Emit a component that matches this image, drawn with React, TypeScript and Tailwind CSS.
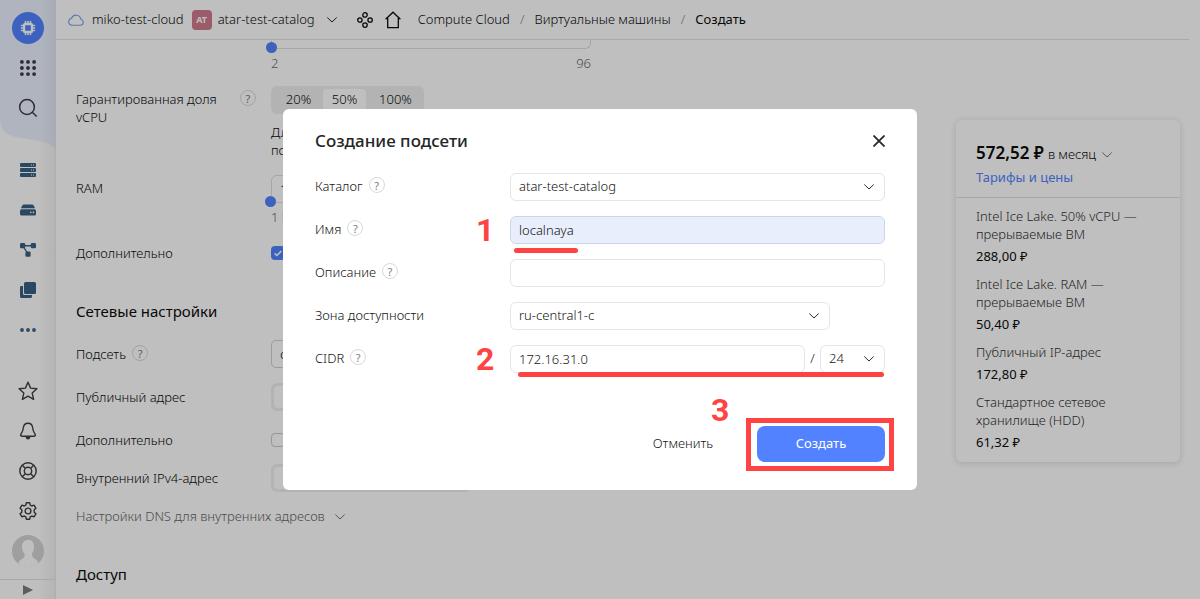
import type { ReactNode } from 'react';

function Chevron({ className = '' }: { className?: string }) {
  return (
    <svg viewBox="0 0 10 6" className={`h-1.5 w-2.5 shrink-0 ${className}`} fill="none" stroke="currentColor" aria-hidden="true">
      <path d="M.3.500L5 5l4.700-4.500" strokeWidth=".9" />
    </svg>
  );
}

function Help() {
  return (
    <button
      type="button"
      aria-label="Справка"
      className="flex size-4 shrink-0 items-center justify-center rounded-full border border-[#d9d9d9] text-[11px] leading-none font-normal text-[#7d7d7d]"
    >
      ?
    </button>
  );
}

function Icon({ children, size = 18 }: { children: ReactNode; size?: number }) {
  return (
    <svg width={size} height={size} viewBox="0 0 18 18" fill="none" stroke="currentColor" strokeWidth="1.4" strokeLinejoin="round" aria-hidden="true">
      {children}
    </svg>
  );
}

function RailButton({ label, children }: { label: string; children: ReactNode }) {
  return (
    <button type="button" aria-label={label} className="flex h-10 w-full shrink-0 items-center justify-center">
      {children}
    </button>
  );
}

function Rail() {
  return (
    <nav aria-label="Сервисы" className="relative flex w-14 shrink-0 flex-col items-center border-r border-[#e8e8e8] bg-linear-to-r from-white from-70% to-[#f1f1f1]">
      <svg className="absolute top-0 left-0" width="56" height="150" viewBox="0 0 56 150" aria-hidden="true">
        <defs>
          <linearGradient id="wave" x1="0" x2="1" y1="0" y2="0">
            <stop offset=".7" stopColor="#ebf1ff" />
            <stop offset="1" stopColor="#dfe5f3" />
          </linearGradient>
        </defs>
        <path fill="url(#wave)" d="M0 0H56V149C46 138 18 140 7 134C2 130 0 125 0 118Z" />
      </svg>
      <div className="relative flex w-full flex-col pt-2">
        <RailButton label="Compute Cloud">
          <span className="flex size-8 items-center justify-center rounded-full bg-[#5282ff] text-white">
            <svg width="16" height="16" viewBox="0 0 16 16" aria-hidden="true">
              <g stroke="currentColor" strokeWidth="1.6" strokeLinecap="round">
                <path d="M5.5 1.5v2M8 1.5v2M10.5 1.5v2M5.5 12.5v2M8 12.5v2M10.5 12.5v2M1.5 5.5h2M1.5 8h2M1.5 10.5h2M12.5 5.5h2M12.5 8h2M12.5 10.5h2" />
              </g>
              <path fill="currentColor" fillRule="evenodd" d="M4.5 3h7A1.5 1.5 0 0 1 13 4.500v7a1.500 1.500 0 0 1-1.500 1.500h-7A1.500 1.500 0 0 1 3 11.500v-7A1.500 1.500 0 0 1 4.500 3ZM5.200 5.200v5.600h5.600V5.200Z" />
            </svg>
          </span>
        </RailButton>
        <RailButton label="Все сервисы">
          <svg width="16" height="16" viewBox="0 0 16 16" fill="#3c3c44" aria-hidden="true">
            {[1.9, 8, 14.1].map((y) => [1.9, 8, 14.1].map((x) => <circle key={`${x}-${y}`} cx={x} cy={y} r="1.9" />))}
          </svg>
        </RailButton>
        <RailButton label="Поиск">
          <svg width="20" height="20" viewBox="0 0 20 20" fill="none" stroke="#3c3c44" strokeWidth="1.5" aria-hidden="true">
            <circle cx="9" cy="9" r="7.400" />
            <path d="M14.300 14.300l4.400 4.200" />
          </svg>
        </RailButton>
      </div>
      <div className="mt-[22px] flex w-full flex-col text-[#3a6083]">
        <RailButton label="Виртуальные машины">
          <svg width="16" height="14" viewBox="0 0 16 14" fill="currentColor" aria-hidden="true">
            <rect width="16" height="4" rx="1" />
            <rect y="5" width="16" height="4" rx="1" />
            <rect y="10" width="16" height="4" rx="1" />
            <path stroke="#fff" strokeWidth="1" strokeDasharray="1 1" d="M11 2h3M11 7h3M11 12h3" />
          </svg>
        </RailButton>
        <RailButton label="Диски">
          <svg width="16" height="12" viewBox="0 0 16 12" fill="currentColor" aria-hidden="true">
            <path d="M3.700.5h8.600q.6 0 1 .6L15.200 4.300H.800L2.700 1.100q.4-.6 1-.6Z" />
            <rect y="5.200" width="16" height="6.300" rx="1.500" />
            <circle cx="10.800" cy="8.400" r=".8" fill="#fff" />
            <circle cx="13.400" cy="8.400" r=".8" fill="#fff" />
          </svg>
        </RailButton>
        <RailButton label="Группы размещения">
          <svg width="16" height="14" viewBox="0 0 16 14" fill="currentColor" aria-hidden="true">
            <path stroke="currentColor" strokeWidth="1.400" d="M2.500 2.800h11M3 3l5 8" />
            <rect width="5.200" height="5.200" rx="1.200" />
            <rect x="10.800" width="5.200" height="5.200" rx="1.200" />
            <rect x="5.400" y="8.600" width="5.200" height="5.200" rx="1.200" />
          </svg>
        </RailButton>
        <RailButton label="Образы">
          <svg width="16" height="16" viewBox="0 0 16 16" fill="currentColor" aria-hidden="true">
            <rect x="4" width="12" height="12" rx="1.500" />
            <path d="M1.200 4H3v7.500Q3 13 4.500 13H12v1.500Q12 16 10.500 16h-9Q0 16 0 14.500V5.200Q0 4 1.200 4Z" />
          </svg>
        </RailButton>
        <RailButton label="Ещё">
          <svg width="16" height="4" viewBox="0 0 16 4" fill="currentColor" aria-hidden="true">
            <circle cx="2" cy="2" r="1.900" />
            <circle cx="8" cy="2" r="1.900" />
            <circle cx="14" cy="2" r="1.900" />
          </svg>
        </RailButton>
      </div>
      <div className="mt-auto flex w-full flex-col text-[#3f3f3f]">
        <RailButton label="Избранное">
          <svg width="20" height="20" viewBox="0 0 20 20" fill="none" stroke="currentColor" strokeWidth="1.400" strokeLinejoin="round" aria-hidden="true">
            <path d="M10 1.200l2.600 5.900 6.300.7-4.700 4.300 1.400 6.300L10 15.200l-5.600 3.200 1.400-6.300L1.100 7.800l6.300-.7Z" />
          </svg>
        </RailButton>
        <RailButton label="Уведомления">
          <Icon>
            <path d="M9 1.200C5.900 1.200 4.600 3.400 4.300 6c-.3 2.900-.9 4-2.200 5.800-1 1.600-.5 2.400.8 2.400h12.200c1.300 0 1.800-.8.8-2.400C14.600 10 14 8.900 13.700 6 13.400 3.400 12.100 1.200 9 1.200Z" />
            <path fill="currentColor" stroke="none" d="M6.500 15h5q-.8 2.500-2.500 2.500T6.500 15Z" />
          </Icon>
        </RailButton>
        <RailButton label="Поддержка">
          <Icon>
            <circle cx="9" cy="9" r="8.200" />
            <circle cx="9" cy="9" r="3.700" />
            <path d="M3.300 3.300l3.200 3.200M14.700 3.300l-3.200 3.200M3.300 14.700l3.200-3.200M14.700 14.700l-3.200-3.200" />
          </Icon>
        </RailButton>
        <RailButton label="Настройки">
          <Icon>
            <circle cx="9" cy="9" r="2.900" />
            <path d="M7.300.8h3.400l.5 2.300 1.600.9 2.200-.8 1.900 3-1.700 1.600v2.400l1.700 1.600-1.900 3-2.200-.8-1.600.9-.5 2.300H7.300l-.5-2.300-1.600-.9-2.200.8-1.900-3 1.700-1.600V7.800L1.100 6.200l1.900-3 2.200.8 1.600-.9Z" />
          </Icon>
        </RailButton>
        <RailButton label="Профиль">
          <svg width="32" height="32" viewBox="0 0 32 32" aria-hidden="true">
            <defs>
              <clipPath id="face">
                <circle cx="16" cy="16" r="16" />
              </clipPath>
            </defs>
            <g clipPath="url(#face)">
              <rect width="32" height="32" fill="#d4d4d4" />
              <path fill="#fff" d="M16.500 5c4 0 5.500 2.500 5.500 6.500 0 3.500-.7 5.500-2 7 0 2.500.5 4 3 5.500 2 1 3.500 2.500 4 8H6c.5-5.500 2-7 4-8s3-2.500 2.500-5c-1.300-1.500-2.500-3.500-2.500-7.500C10 7.500 12 5 16.500 5Z" />
            </g>
          </svg>
        </RailButton>
      </div>
      <button type="button" aria-label="Развернуть меню" className="mt-2 flex h-5 w-full shrink-0 items-center justify-center border-t border-[#e0e0e0]">
        <svg width="10" height="10" viewBox="0 0 10 10" fill="#7c7c7c" aria-hidden="true">
          <path d="M0 0l10 5-10 5Z" />
        </svg>
      </button>
    </nav>
  );
}

function Header() {
  return (
    <header className="mr-[11px] flex h-10 shrink-0 items-center border-b border-[#e2e2e2] pl-3 text-[13px] whitespace-nowrap">
      <svg width="16" height="12" viewBox="0 0 16 12" fill="none" stroke="#7d9df0" strokeWidth="1.100" aria-hidden="true">
        <path d="M4 11.300h8.300a3.100 3.100 0 0 0 .6-6.100A4.900 4.900 0 0 0 3.500 4.300 3.550 3.550 0 0 0 4 11.300Z" />
      </svg>
      <a href="#cloud" className="ml-2">miko-test-cloud</a>
      <span className="ml-2 flex size-5 items-center justify-center rounded-sm bg-[#d07a8c] text-[9px] font-bold text-white">AT</span>
      <button type="button" className="ml-1.5 flex items-center gap-3">
        atar-test-catalog
        <Chevron />
      </button>
      <svg className="ml-5" width="16" height="16" viewBox="0 0 16 16" fill="none" stroke="currentColor" strokeWidth="1.300" aria-hidden="true">
        <circle cx="8" cy="2.900" r="2.200" />
        <circle cx="8" cy="13.100" r="2.200" />
        <circle cx="2.900" cy="8" r="2.200" />
        <circle cx="13.100" cy="8" r="2.200" />
      </svg>
      <a href="#home" aria-label="Главная" className="ml-3">
        <svg width="16" height="18" viewBox="0 0 16 18" fill="none" stroke="currentColor" strokeWidth="1.300" aria-hidden="true">
          <path d="M.6 8.300L8 1.200l7.400 7.100M2.700 7v9.700h10.600V7" />
        </svg>
      </a>
      <nav aria-label="Путь" className="ml-[17px] flex items-center gap-2.5">
        <a href="#compute">Compute Cloud</a>
        <span className="text-[#8a8a8a]">/</span>
        <a href="#vms">Виртуальные машины</a>
        <span className="text-[#8a8a8a]">/</span>
        <span className="font-normal">Создать</span>
      </nav>
    </header>
  );
}

const thumb =
  'absolute -left-[6px] h-[11px] w-[332px] appearance-none bg-transparent [&::-webkit-slider-thumb]:size-[11px] [&::-webkit-slider-thumb]:appearance-none [&::-webkit-slider-thumb]:rounded-full [&::-webkit-slider-thumb]:bg-[#5282ff]';

const segment = 'flex h-7 w-[200px] items-center rounded-md bg-[#efefef] p-[3px]';

function VmForm() {
  return (
    <form className="w-[535px] shrink-0 pl-5 text-[13px] leading-[18px]">
      <div className="ml-[195px]">
        <div className="relative h-[9px] rounded-b-md border border-t-0 border-[#dfdfdf]">
          <input type="range" aria-label="Количество vCPU" min={2} max={96} defaultValue={2} className={`${thumb} top-[2px]`} />
        </div>
        <div className="mt-[5px] flex justify-between text-[#666]">
          <span>2</span>
          <span>96</span>
        </div>
      </div>
      <div className="mt-[14px] flex">
        <div className="flex w-[195px] shrink-0 items-start justify-between pt-1 pr-[15px]">
          <span>Гарантированная доля vCPU</span>
          <Help />
        </div>
        <div>
          <div className="flex h-7 w-[153px] items-start justify-between rounded-md bg-[#efefef] p-[3px]">
            <button type="button" className="h-5 flex-1">20%</button>
            <button type="button" className="h-[22px] w-[43px] rounded-sm bg-white pb-0.5">50%</button>
            <button type="button" className="h-5 w-[55px] pl-1">100%</button>
          </div>
          <p className="mt-[9px]">
            Для ВМ<br />порог
          </p>
        </div>
      </div>
      <div className="mt-4 flex">
        <label htmlFor="ram" className="w-[195px] shrink-0 pt-1">RAM</label>
        <div className="flex-1">
          <div className="relative">
            <input id="ram" defaultValue="1" className="h-7 w-full rounded-md border border-[#dfdfdf] px-2" />
            <input type="range" aria-label="Объём RAM" min={1} max={256} defaultValue={1} className={`${thumb} top-[21px]`} />
          </div>
          <div className="mt-[5px] flex justify-between text-[#666]">
            <span>1 ГБ</span>
            <span>256 ГБ</span>
          </div>
        </div>
      </div>
      <label className="mt-[18px] flex">
        <span className="w-[195px]">Дополнительно</span>
        <span className="relative flex items-center">
          <input type="checkbox" defaultChecked className="size-[14px] appearance-none rounded-sm bg-[#5282ff]" />
          <svg className="pointer-events-none absolute left-[3px]" width="8" height="7" viewBox="0 0 8 7" fill="none" stroke="#fff" strokeWidth="1.600" aria-hidden="true">
            <path d="M.7 3.400l2.200 2.100L7.300 1" />
          </svg>
        </span>
      </label>
      <h2 className="mt-[39px] text-[15px] leading-5 font-normal">Сетевые настройки</h2>
      <div className="mt-[19px] flex flex-col gap-[15px]">
        <div className="flex items-center">
          <div className="flex w-[195px] gap-1.5">
            <label htmlFor="subnet">Подсеть</label>
            <Help />
          </div>
          <select id="subnet" className="h-7 flex-1 appearance-none rounded-[5px] border border-[#d0d0d0] px-2">
            <option>otar-subnet</option>
          </select>
        </div>
        <div className="flex items-center">
          <span className="w-[195px]">Публичный адрес</span>
          <div className={segment}>
            <span className="h-[22px] w-16 rounded-sm bg-white" />
          </div>
        </div>
        <label className="flex h-7 items-center">
          <span className="w-[195px]">Дополнительно</span>
          <input type="checkbox" className="size-[14px] appearance-none rounded-sm border border-[#c8c8c8]" />
        </label>
      </div>
      <div className="mt-[10px] flex items-center">
        <span className="w-[195px]">Внутренний IPv4-адрес</span>
        <div className={segment}>
          <span className="h-[22px] w-24 rounded-sm bg-white" />
        </div>
      </div>
      <button type="button" className="mt-[15px] flex items-center gap-2.5 whitespace-nowrap text-[#666]">
        Настройки DNS для внутренних адресов
        <Chevron className="mt-0.5" />
      </button>
      <h2 className="mt-[39px] text-[15px] leading-5 font-normal">Доступ</h2>
    </form>
  );
}

const charges = [
  ['Intel Ice Lake. 50% vCPU — прерываемые ВМ', '288,00 ₽'],
  ['Intel Ice Lake. RAM — прерываемые ВМ', '50,40 ₽'],
  ['Публичный IP-адрес', '172,80 ₽'],
  ['Стандартное сетевое хранилище (HDD)', '61,32 ₽'],
];

function Pricing() {
  return (
    <aside className="mt-20 mr-5 ml-auto w-56 shrink-0 self-start rounded-md bg-white text-[13px] leading-[18px] shadow-[0_1px_6px_rgba(0,0,0,0.15)]">
      <div className="border-b border-[#e0e0e0] px-5 pt-[21px] pb-[11px]">
        <button type="button" className="flex h-6 items-baseline gap-1 whitespace-nowrap">
          <span className="text-[17px] leading-6 font-semibold">572,52 ₽</span>
          <span>в месяц</span>
          <Chevron className="mt-1 ml-0.5 self-center text-[#666]" />
        </button>
        <a href="#prices" className="mt-[3px] block font-normal text-[#5282ff]">Тарифы и цены</a>
      </div>
      <dl className="flex flex-col gap-[10px] px-5 pt-[9px] pb-[11px]">
        {charges.map(([name, price]) => (
          <div key={name}>
            <dt className="text-[#333]">{name}</dt>
            <dd className="mt-1 font-normal">{price}</dd>
          </div>
        ))}
      </dl>
    </aside>
  );
}

const field = 'h-7 w-full appearance-none rounded-md border border-[#e5e5e5] bg-white px-2 text-[13px] outline-none';

function Row({ id, label, help = true, step, children }: { id: string; label: string; help?: boolean; step?: string; children: ReactNode }) {
  return (
    <div className="relative flex h-7">
      <div className="flex w-[195px] shrink-0 items-start gap-1.5 pt-1">
        <label htmlFor={id} className="leading-[18px]">{label}</label>
        {help && <Help />}
      </div>
      {step && <Step className="absolute -top-0.5 left-[161px]">{step}</Step>}
      <div className="relative flex flex-1 items-center">{children}</div>
    </div>
  );
}

function Step({ className, children }: { className: string; children: ReactNode }) {
  return <span className={`font-['Roboto',sans-serif] text-[32px] leading-8 font-bold text-[#ff4242] ${className}`}>{children}</span>;
}

function Select({ id, value, className }: { id: string; value: string; className: string }) {
  return (
    <div className={`relative flex items-center ${className}`}>
      <select id={id} aria-label={id === 'mask' ? 'Маска' : undefined} className={field}>
        <option>{value}</option>
      </select>
      <Chevron className="pointer-events-none absolute right-[11px]" />
    </div>
  );
}

function SubnetDialog() {
  return (
    <div className="fixed inset-0 flex items-center justify-center bg-black/25">
      <form role="dialog" aria-labelledby="dialog-title" className="w-[634px] rounded-md bg-white px-8 pt-5 pb-7 text-[13px] text-[#141414]">
        <div className="flex h-6 items-center justify-between">
          <h1 id="dialog-title" className="text-[17px] font-medium text-[#262626]">Создание подсети</h1>
          <button type="button" aria-label="Закрыть">
            <svg width="12" height="12" viewBox="0 0 12 12" stroke="#262626" strokeWidth="1.800" aria-hidden="true">
              <path d="M.5.5l11 11M11.500.5l-11 11" />
            </svg>
          </button>
        </div>
        <div className="mt-5 flex flex-col gap-[15px]">
          <Row id="catalog" label="Каталог">
            <Select id="catalog" value="atar-test-catalog" className="w-full" />
          </Row>
          <Row id="name" label="Имя" step="1">
            <input id="name" defaultValue="localnaya" className="h-7 w-full rounded-md border border-[#ccd6ea] bg-[#e8eefc] px-2 outline-none" />
            <span className="absolute top-8 left-1 h-[5px] w-16 rounded-full bg-[#ff4242]" />
          </Row>
          <Row id="description" label="Описание">
            <input id="description" className={field} />
          </Row>
          <Row id="zone" label="Зона доступности" help={false}>
            <Select id="zone" value="ru-central1-c" className="w-80" />
          </Row>
          <Row id="cidr" label="CIDR" step="2">
            <input id="cidr" defaultValue="172.16.31.0" className={`${field} min-w-0 flex-1`} />
            <span className="w-[15px] text-center">/</span>
            <Select id="mask" value="24" className="w-[65px]" />
            <span className="absolute top-[27px] right-px left-2 h-[5px] rounded-full bg-[#ff4242]" />
          </Row>
        </div>
        <div className="mt-[53px] flex justify-end gap-2.5">
          <div className="relative">
            <button type="button" className="h-9 w-32">Отменить</button>
            <Step className="absolute -top-8 left-[92px]">3</Step>
          </div>
          <div className="relative">
            <button type="submit" className="h-9 w-32 rounded-lg bg-[#5282ff] font-normal text-white">Создать</button>
            <span className="pointer-events-none absolute -top-2 -right-[9px] -bottom-[9px] -left-[11px] border-5 border-[#ff4242]" />
          </div>
        </div>
      </form>
    </div>
  );
}

export default function App() {
  return (
    <div className="flex h-screen overflow-hidden bg-white font-['Noto_Sans',sans-serif] font-light text-[#0c0c0c]">
      <Rail />
      <div className="flex min-w-0 flex-1 flex-col">
        <Header />
        <main className="flex min-h-0 flex-1 overflow-hidden">
          <VmForm />
          <Pricing />
        </main>
      </div>
      <SubnetDialog />
    </div>
  );
}
